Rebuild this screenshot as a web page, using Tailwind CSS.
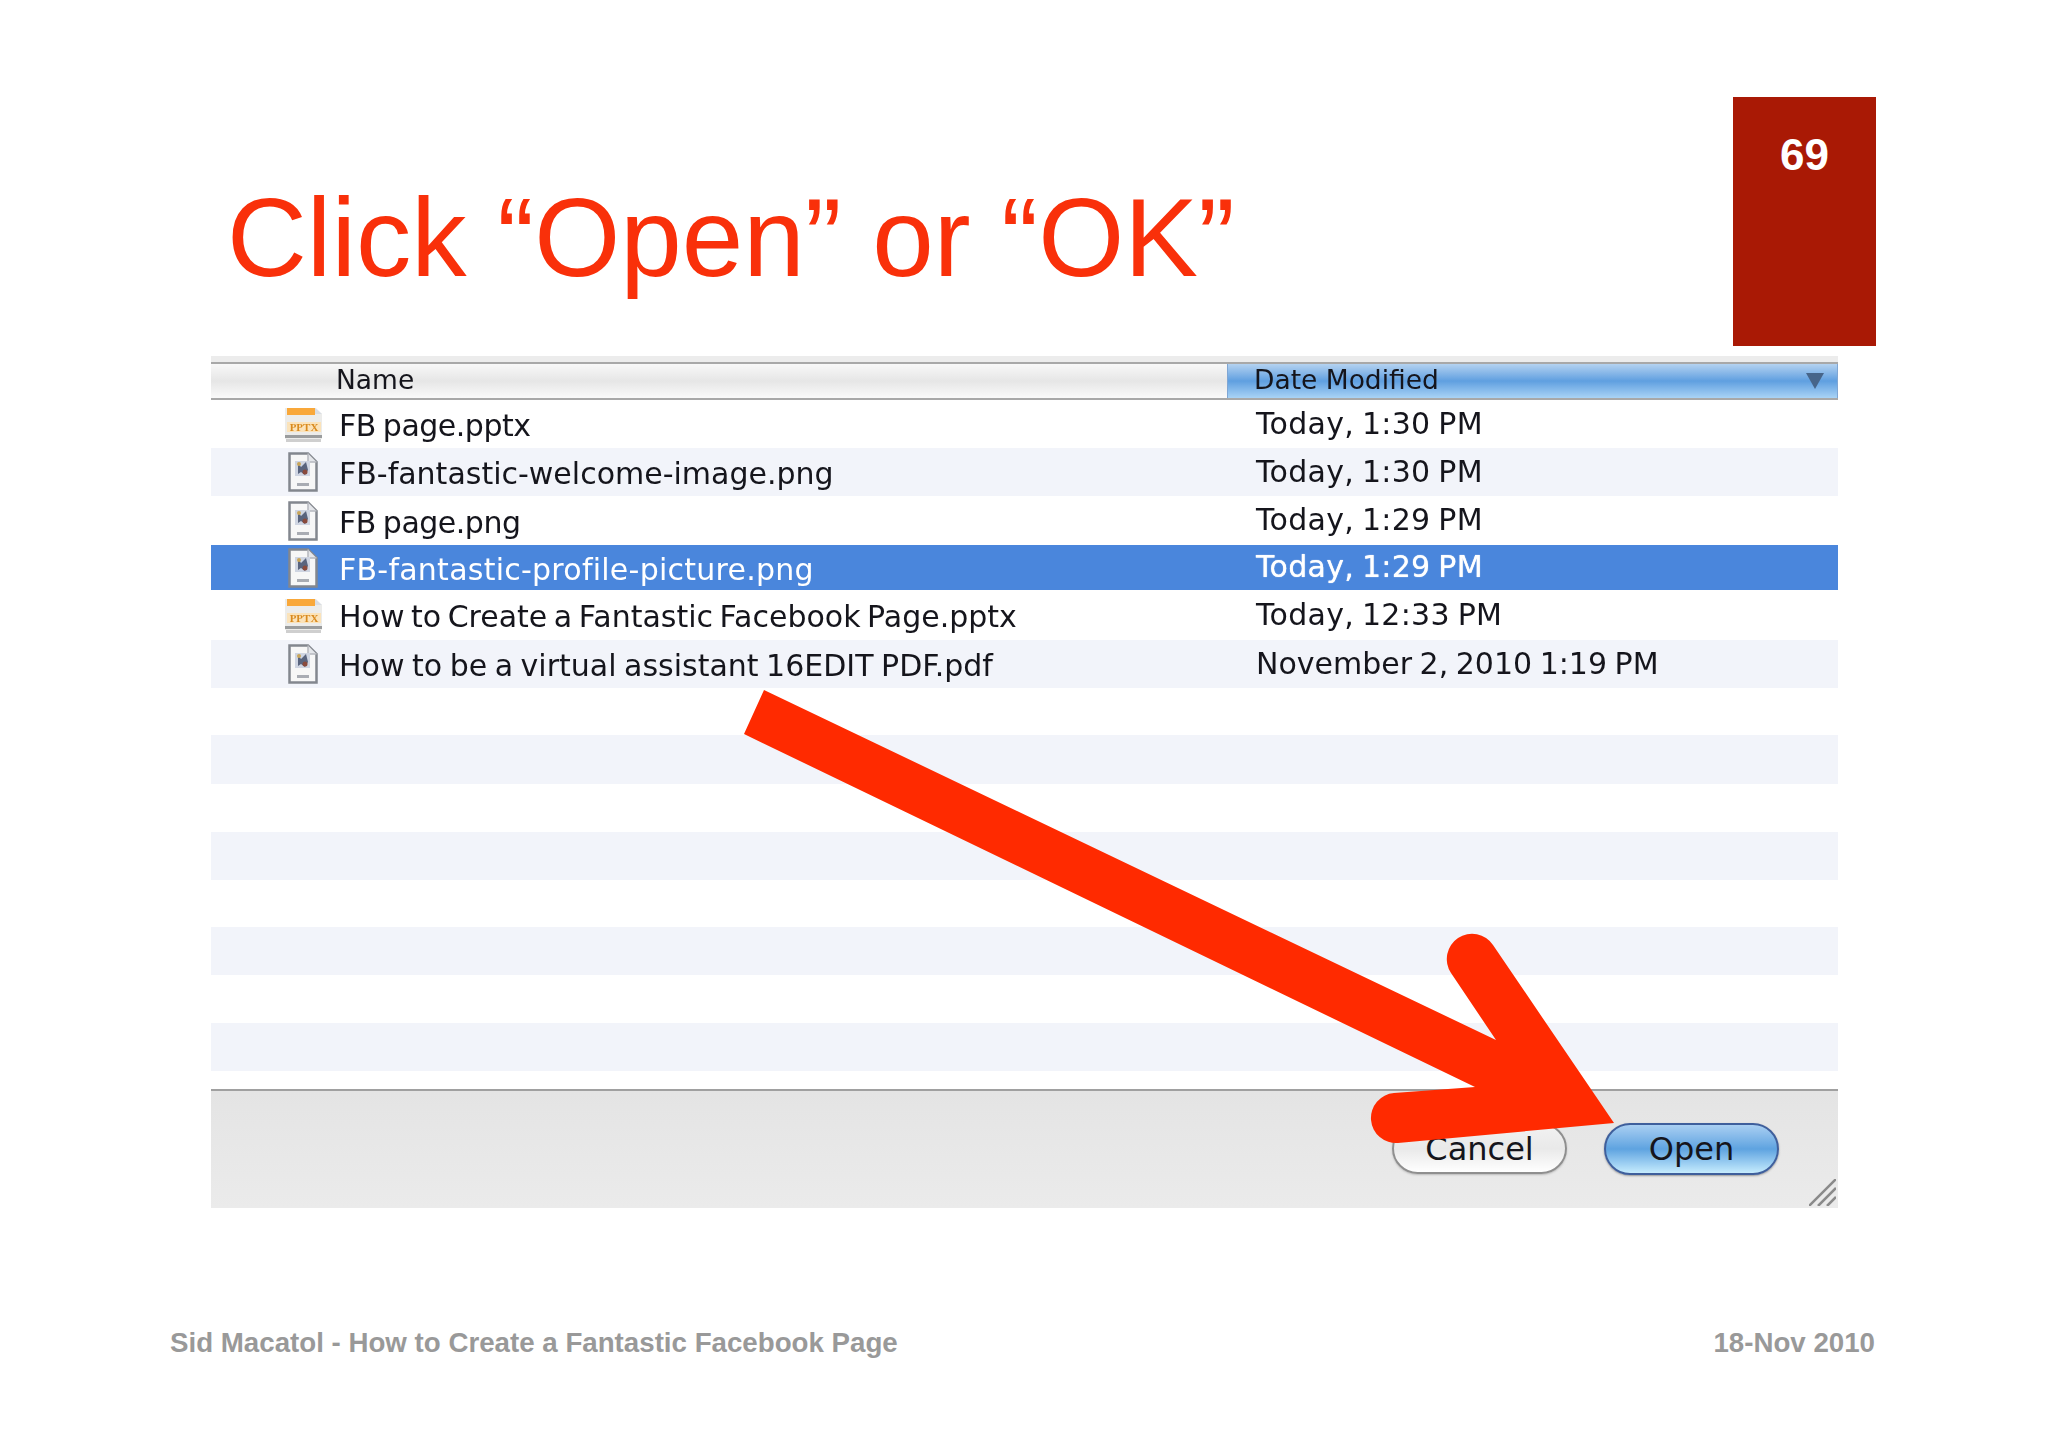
<!DOCTYPE html>
<html lang="en">
<head>
  <meta charset="UTF-8" />
  <title>Click Open or OK</title>
  <script src="https://cdn.jsdelivr.net/npm/@tailwindcss/browser@4"></script>
</head>
<body class="bg-white font-['Liberation_Sans',sans-serif]">
  <!-- Icons -->
  <svg class="hidden">
    <symbol id="doc" viewBox="0 0 30 40">
      <path d="M1.500 1.500H20L28.500 10V38.500H1.500Z" fill="#f7f7f7" stroke="#83878e" stroke-width="2.500"/>
      <path d="M20 1.500V10H28.500" fill="#e4e6ea" stroke="#b5b8be" stroke-width="1.500"/>
      <path d="M7 9h15v15H7z" fill="#cfd5e2"/>
      <path d="M10 11l3 4 5-5 2 8-3 5-4-3-3 2z" fill="#59647e"/>
      <circle cx="17" cy="20" r="2.500" fill="#8a4a3c"/>
      <circle cx="11" cy="12" r="2" fill="#c9a65a"/>
      <path d="M9 31h12v3H9z" fill="#a9acb3"/>
    </symbol>
    <symbol id="pptx" viewBox="0 0 39 35">
      <path d="M1 1H32L38 7V32H1Z" fill="#ececea"/>
      <path d="M3 1H31V8H3Z" fill="#f9a83a"/>
      <path d="M31 1L38 7H31Z" fill="#d9dde3"/>
      <path d="M3 15H37V25H3Z" fill="#fbe3ba"/>
      <text x="20" y="24" text-anchor="middle" font-family="Liberation Serif" font-size="11" font-weight="700" fill="#d98a1e">PPTX</text>
      <path d="M1 28H38V31H1Z" fill="#9b9d9e"/>
      <path d="M2 32H37V35H2Z" fill="#cfcfcf"/>
    </symbol>
  </svg>

  <div class="relative w-[2048px] h-[1447px] overflow-hidden">
    <!-- Slide heading -->
    <header class="flex justify-between items-start pt-[97px] pl-[227px] pr-[172px] h-[346px]">
      <h1 class="mt-[81px] text-[110.600px] leading-[120px] text-[#f9300a]">Click “Open” or “OK”</h1>
      <div class="w-[143px] h-[249px] bg-[#a91905] text-white text-center font-bold text-[44px] leading-[50px] pt-[33px]">69</div>
    </header>

    <!-- File dialog screenshot -->
    <section class="ml-[211px] mt-[10px] w-[1627px] blur-[0.6px] font-['DejaVu_Sans',sans-serif] text-[#15151c]">
      <div class="h-[6px] bg-[#ececec]"></div>
      <div class="flex h-[38px] text-[26.500px] leading-[31px] border-y-2 border-[#a8a8a8]">
        <div class="w-[1016px] pl-[125px] bg-gradient-to-b from-[#f8f8f8] via-[#e6e6e6] to-[#fafafa]">Name</div>
        <div class="flex-1 flex justify-between pl-[26px] pr-[13px] bg-gradient-to-b from-[#b4d2f0] via-[#5f9fe0] to-[#a9d3f5] border-x border-[#7fa6d4]">
          <span>Date Modified</span>
          <svg class="mt-[9px] w-[18px] h-[16px]" viewBox="0 0 18 16"><path d="M0 0H18L9 16Z" fill="#47658a"/></svg>
        </div>
      </div>

      <div class="text-[30px] [word-spacing:-2px]">
        <div class="flex items-center h-[48px]">
          <svg class="ml-[73px] w-[39px] h-[35px]"><use href="#pptx"/></svg>
          <span class="ml-[16px] pt-[3px] w-[917px] tracking-[-0.5px]">FB page.pptx</span><span class="pb-[2px] tracking-[0.3px]">Today, 1:30 PM</span>
        </div>
        <div class="flex items-center h-[48px] bg-[#f2f4fa]">
          <svg class="ml-[77px] w-[30px] h-[40px]"><use href="#doc"/></svg>
          <span class="ml-[21px] pt-[3px] w-[917px]">FB-fantastic-welcome-image.png</span><span class="pb-[2px] tracking-[0.3px]">Today, 1:30 PM</span>
        </div>
        <div class="flex items-center h-[49px]">
          <svg class="ml-[77px] w-[30px] h-[40px]"><use href="#doc"/></svg>
          <span class="ml-[21px] pt-[3px] w-[917px] tracking-[-0.5px]">FB page.png</span><span class="pb-[2px] tracking-[0.3px]">Today, 1:29 PM</span>
        </div>
        <div class="flex items-center h-[45px] bg-[#4a86dc] text-white">
          <svg class="ml-[77px] w-[30px] h-[40px]"><use href="#doc"/></svg>
          <span class="ml-[21px] pt-[3px] w-[917px] tracking-[0.25px]">FB-fantastic-profile-picture.png</span><span class="pb-[2px] tracking-[0.3px] [text-shadow:0_0_1px_white]">Today, 1:29 PM</span>
        </div>
        <div class="flex items-center h-[50px]">
          <svg class="ml-[73px] w-[39px] h-[35px]"><use href="#pptx"/></svg>
          <span class="ml-[16px] pt-[3px] w-[917px] [word-spacing:-3px]">How to Create a Fantastic Facebook Page.pptx</span><span class="pb-[2px] tracking-[0.3px]">Today, 12:33 PM</span>
        </div>
        <div class="flex items-center h-[48px] bg-[#f2f4fa]">
          <svg class="ml-[77px] w-[30px] h-[40px]"><use href="#doc"/></svg>
          <span class="ml-[21px] pt-[3px] w-[917px]">How to be a virtual assistant 16EDIT PDF.pdf</span><span class="pb-[2px]">November 2, 2010 1:19 PM</span>
        </div>
        <div class="h-[47px]"></div>
        <div class="h-[49px] bg-[#f2f4fa]"></div>
        <div class="h-[48px]"></div>
        <div class="h-[48px] bg-[#f2f4fa]"></div>
        <div class="h-[47px]"></div>
        <div class="h-[48px] bg-[#f2f4fa]"></div>
        <div class="h-[48px]"></div>
        <div class="h-[48px] bg-[#f2f4fa]"></div>
        <div class="h-[18px]"></div>
      </div>

      <footer class="relative flex justify-end gap-[37px] h-[119px] pt-[32px] pr-[59px] bg-gradient-to-b from-[#e4e4e4] to-[#ebebeb] border-t-2 border-[#a0a0a0] text-[32px]">
        <button class="w-[175px] h-[51px] rounded-full border-2 border-[#8f8f8f] bg-gradient-to-b from-[#f2f2f2] via-[#e9e9e9] to-white leading-[46px] shadow-[0_1px_2px_#bbbbbb]">Cancel</button>
        <button class="w-[175px] h-[52px] rounded-full border-2 border-[#3f5f9c] bg-gradient-to-b from-[#a9cff2] via-[#5ea3e0] to-[#c6ecfd] leading-[46px] shadow-[0_1px_2px_#999999]">Open</button>
        <svg class="absolute right-[2px] bottom-[2px] w-[27px] h-[27px]" viewBox="0 0 27 27">
          <path d="M0 27L27 0M9 27L27 9M18 27L27 18" stroke="#8a8a8a" stroke-width="2.500" fill="none"/>
        </svg>
      </footer>
    </section>

    <!-- Slide footer -->
    <div class="flex justify-between mt-[118px] pl-[170px] pr-[173px] text-[27.700px] leading-[34px] font-bold text-[#999999]">
      <span>Sid Macatol - How to Create a Fantastic Facebook Page</span>
      <span>18-Nov 2010</span>
    </div>

    <!-- Red arrow over the dialog -->
    <svg class="absolute left-0 top-0 w-[2048px] h-[1447px] pointer-events-none" viewBox="0 0 2048 1447">
      <path d="M764 690L1496 1040L1451 973A25 25 0 0 1 1493 945L1614 1123L1398 1143A25 25 0 0 1 1394 1093L1475 1087L744 734Z" fill="#ff2a00"/>
    </svg>
  </div>
</body>
</html>
